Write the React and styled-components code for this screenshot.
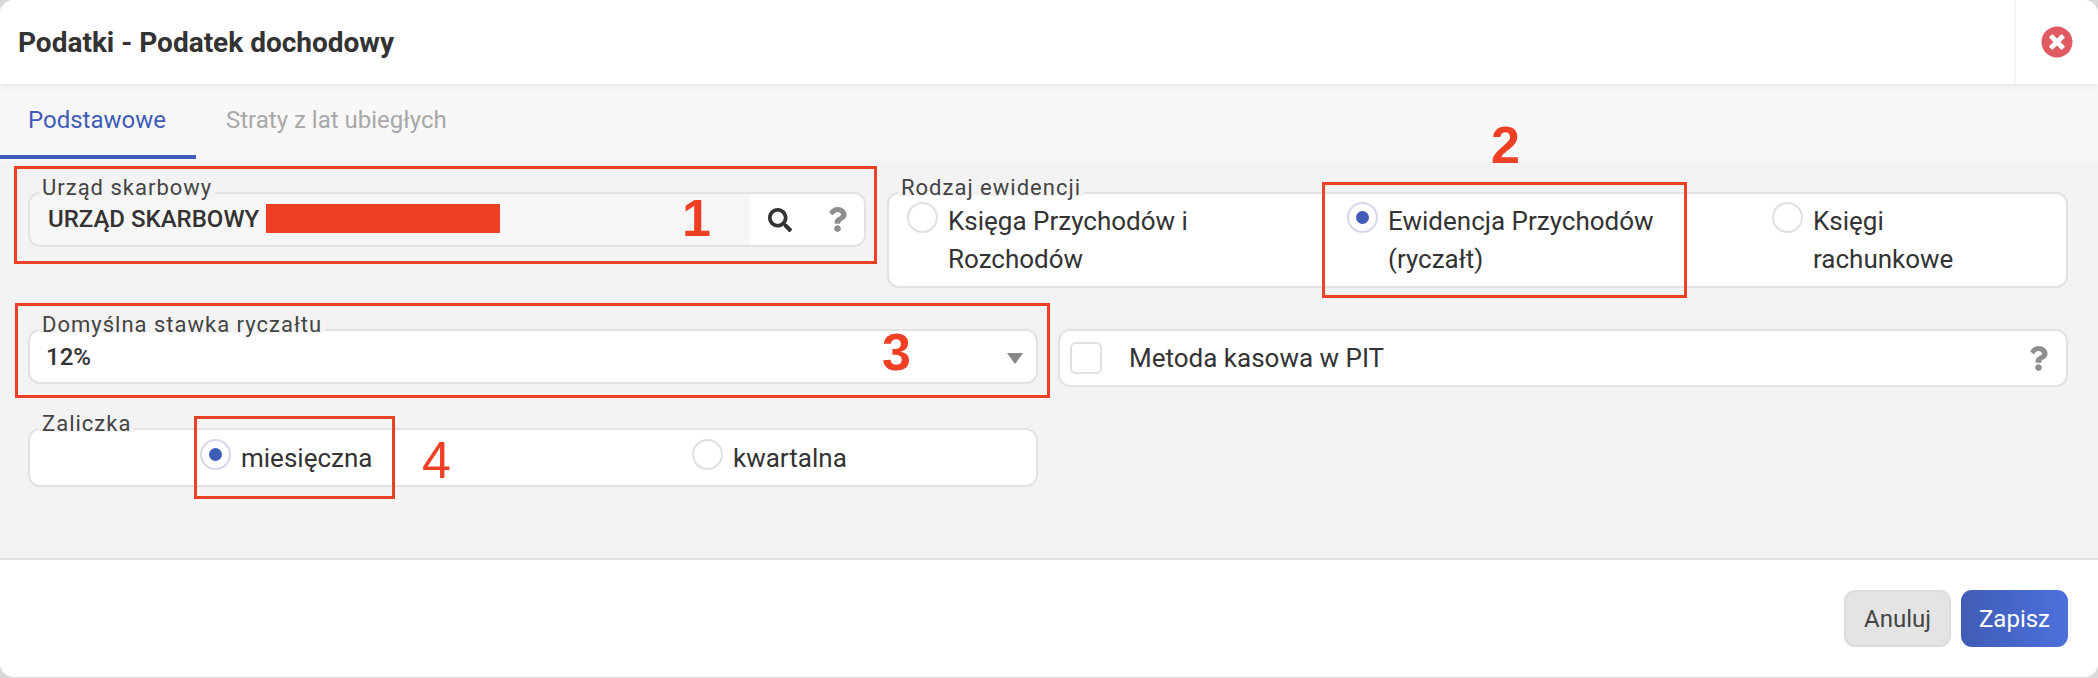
import styled, { createGlobalStyle } from "styled-components";
import { FaSearch, FaQuestion, FaTimesCircle } from "react-icons/fa";

const GlobalStyle = createGlobalStyle`
  html, body {
    margin: 0;
    padding: 0;
    background: #d9d9d9;
  }
  body {
    font-family: Roboto, "Liberation Sans", sans-serif;
    color: #333;
  }
`;

const Modal = styled.div`
  position: relative;
  width: 2098px;
  height: 677px;
  display: flex;
  flex-direction: column;
  background: #fff;
  border-radius: 14px;
  overflow: hidden;
`;

const Header = styled.header`
  position: relative;
  z-index: 1;
  height: 84px;
  flex: none;
  display: flex;
  align-items: center;
  justify-content: space-between;
  background: #fff;
  box-shadow: 0 2px 6px rgba(0, 0, 0, 0.08);
`;

const Title = styled.h1`
  margin: 0 0 0 18px;
  font-size: 28px;
  font-weight: 700;
  color: #333;
`;

const CloseBox = styled.div`
  width: 84px;
  height: 84px;
  display: flex;
  align-items: center;
  justify-content: center;
  border-left: 2px solid #f5f5f5;
  box-sizing: border-box;
  color: #e05a61;
  font-size: 32px;
`;

const Tabs = styled.nav`
  height: 77px;
  flex: none;
  display: flex;
  background: #f8f8f8;
`;

const Tab = styled.div`
  width: ${(p) => p.$width}px;
  height: 75px;
  box-sizing: border-box;
  display: flex;
  align-items: center;
  padding: 0 0 0 ${(p) => p.$pad}px;
  font-size: 24px;
  color: ${(p) => (p.$active ? "#3f5cb8" : "#a8a8a8")};
  border-bottom: 4px solid ${(p) => (p.$active ? "#3f5cb8" : "transparent")};
`;

const Body = styled.main`
  flex: 1;
  display: flex;
  flex-direction: column;
  gap: 41px;
  padding: 31px 30px 0 28px;
  background: #f3f3f3;
  border-bottom: 2px solid #e0e0e0;
`;

const Row = styled.div`
  display: flex;
  align-items: flex-start;
  gap: ${(p) => p.$gap}px;
`;

const Field = styled.div`
  position: relative;
  box-sizing: border-box;
  width: ${(p) => p.$width}px;
  height: ${(p) => p.$height}px;
  flex: none;
  display: flex;
  align-items: center;
  background: ${(p) => p.$bg || "#fff"};
  border: 2px solid #e2e2e2;
  border-radius: 12px;
`;

const Legend = styled.span`
  position: absolute;
  top: -21px;
  left: 9px;
  padding: 0 3px;
  font-size: 22px;
  line-height: 30px;
  letter-spacing: 1px;
  color: #444;
  background: linear-gradient(#f3f3f3, #f3f3f3) 0 18px / 100% 5px no-repeat;
`;

const Value = styled.div`
  flex: 1;
  display: flex;
  align-items: center;
  padding-left: ${(p) => p.$pad}px;
  padding-bottom: ${(p) => p.$lift || 0}px;
  font-size: 24px;
  font-weight: 500;
  color: #333;
`;

const Redacted = styled.span`
  display: inline-block;
  width: 234px;
  height: 29px;
  margin-left: 7px;
  background: #ee4024;
`;

const IconGroup = styled.div`
  width: 114px;
  align-self: stretch;
  display: flex;
  align-items: center;
  gap: 33px;
  padding-left: 18px;
  box-sizing: border-box;
  background: #fff;
  border-radius: 0 10px 10px 0;
  color: #333;
  font-size: 24px;
`;

const HelpIcon = styled(FaQuestion)`
  margin-right: ${(p) => p.$right || 0}px;
  color: #8e8e8e;
  font-size: 25px;
`;

const Caret = styled.span`
  width: 0;
  height: 0;
  margin: 3px 13px 0 0;
  border-left: 8px solid transparent;
  border-right: 8px solid transparent;
  border-top: 11px solid #888;
`;

const RadioGrid = styled.div`
  flex: 1;
  align-self: flex-start;
  display: grid;
  grid-template-columns: ${(p) => p.$columns};
  padding: ${(p) => p.$pad};
`;

const RadioOption = styled.label`
  display: flex;
  align-items: flex-start;
  gap: 10px;
  font-size: 26px;
  line-height: 38px;
  color: #333;
`;

const RadioMark = styled.span`
  width: 31px;
  height: 31px;
  flex: none;
  box-sizing: border-box;
  display: flex;
  align-items: center;
  justify-content: center;
  border: 2px solid ${(p) => (p.$checked ? "#d5d8ea" : "#e0e0e0")};
  border-radius: 50%;
  background: #fff;
  &::after {
    content: "";
    display: ${(p) => (p.$checked ? "block" : "none")};
    width: 13px;
    height: 13px;
    border-radius: 50%;
    background: #3f5cb8;
  }
`;

const CheckMark = styled.span`
  width: 32px;
  height: 32px;
  flex: none;
  box-sizing: border-box;
  margin-left: 10px;
  border: 2px solid #e0e0e0;
  border-radius: 6px;
  background: #fff;
`;

const CheckLabel = styled.span`
  flex: 1;
  margin-left: 27px;
  font-size: 26px;
  color: #333;
`;

const Footer = styled.footer`
  height: 117px;
  flex: none;
  display: flex;
  justify-content: flex-end;
  align-items: flex-start;
  gap: 10px;
  padding: 30px 30px 0 0;
  box-sizing: border-box;
  background: #fff;
`;

const Button = styled.button`
  width: 107px;
  height: 57px;
  box-sizing: border-box;
  border-radius: 11px;
  font-family: inherit;
  font-size: 24px;
  border: ${(p) => (p.$primary ? "none" : "2px solid #dcdcdc")};
  color: ${(p) => (p.$primary ? "#fff" : "#444")};
  background: ${(p) =>
    p.$primary ? "linear-gradient(90deg, #3f5cb5, #4d70dc)" : "#e4e4e4"};
`;

const Box = styled.div`
  position: absolute;
  left: ${(p) => p.$x}px;
  top: ${(p) => p.$y}px;
  width: ${(p) => p.$w}px;
  height: ${(p) => p.$h}px;
  box-sizing: border-box;
  border: 3px solid #ee4024;
  pointer-events: none;
  z-index: 2;
`;

const Mark = styled.span`
  position: absolute;
  left: ${(p) => p.$x}px;
  top: ${(p) => p.$y}px;
  font-size: 52px;
  line-height: 52px;
  font-family: "Liberation Sans", Arial, sans-serif;
  font-weight: ${(p) => p.$weight || 400};
  color: #ee4024;
  z-index: 2;
`;

export default function App() {
  return (
    <>
      <GlobalStyle />
      <Modal>
        <Header>
          <Title>Podatki - Podatek dochodowy</Title>
          <CloseBox>
            <FaTimesCircle />
          </CloseBox>
        </Header>
        <Tabs>
          <Tab $width={196} $pad={28} $active>
            Podstawowe
          </Tab>
          <Tab $width={300} $pad={30}>
            Straty z lat ubiegłych
          </Tab>
        </Tabs>
        <Body>
          <Row $gap={21}>
            <Field $width={838} $height={55} $bg="#f6f6f6">
              <Legend>Urząd skarbowy</Legend>
              <Value $pad={18} $lift={2}>
                URZĄD SKARBOWY
                <Redacted />
              </Value>
              <IconGroup>
                <FaSearch />
                <HelpIcon />
              </IconGroup>
            </Field>
            <Field $width={1181} $height={96}>
              <Legend>Rodzaj ewidencji</Legend>
              <RadioGrid $columns="440px 425px 1fr" $pad="8px 0 0 18px">
                <RadioOption>
                  <RadioMark />
                  <span>
                    Księga Przychodów i
                    <br />
                    Rozchodów
                  </span>
                </RadioOption>
                <RadioOption>
                  <RadioMark $checked />
                  <span>
                    Ewidencja Przychodów
                    <br />
                    (ryczałt)
                  </span>
                </RadioOption>
                <RadioOption>
                  <RadioMark />
                  <span>
                    Księgi
                    <br />
                    rachunkowe
                  </span>
                </RadioOption>
              </RadioGrid>
            </Field>
          </Row>
          <Row $gap={20}>
            <Field $width={1010} $height={55}>
              <Legend>Domyślna stawka ryczałtu</Legend>
              <Value $pad={16}>12%</Value>
              <Caret />
            </Field>
            <Field $width={1010} $height={58}>
              <CheckMark />
              <CheckLabel>Metoda kasowa w PIT</CheckLabel>
              <HelpIcon $right={15} />
            </Field>
          </Row>
          <Row>
            <Field $width={1010} $height={59}>
              <Legend>Zaliczka</Legend>
              <RadioGrid $columns="492px 1fr" $pad="9px 0 0 170px">
                <RadioOption>
                  <RadioMark $checked />
                  miesięczna
                </RadioOption>
                <RadioOption>
                  <RadioMark />
                  kwartalna
                </RadioOption>
              </RadioGrid>
            </Field>
          </Row>
        </Body>
        <Footer>
          <Button>Anuluj</Button>
          <Button $primary>Zapisz</Button>
        </Footer>

        <Box $x={14} $y={166} $w={863} $h={98} />
        <Box $x={1322} $y={182} $w={365} $h={116} />
        <Box $x={15} $y={303} $w={1035} $h={95} />
        <Box $x={194} $y={416} $w={201} $h={83} />
        <Mark $x={682} $y={192} $weight={700}>1</Mark>
        <Mark $x={1491} $y={119} $weight={700}>2</Mark>
        <Mark $x={882} $y={326} $weight={700}>3</Mark>
        <Mark $x={422} $y={434}>4</Mark>
      </Modal>
    </>
  );
}
